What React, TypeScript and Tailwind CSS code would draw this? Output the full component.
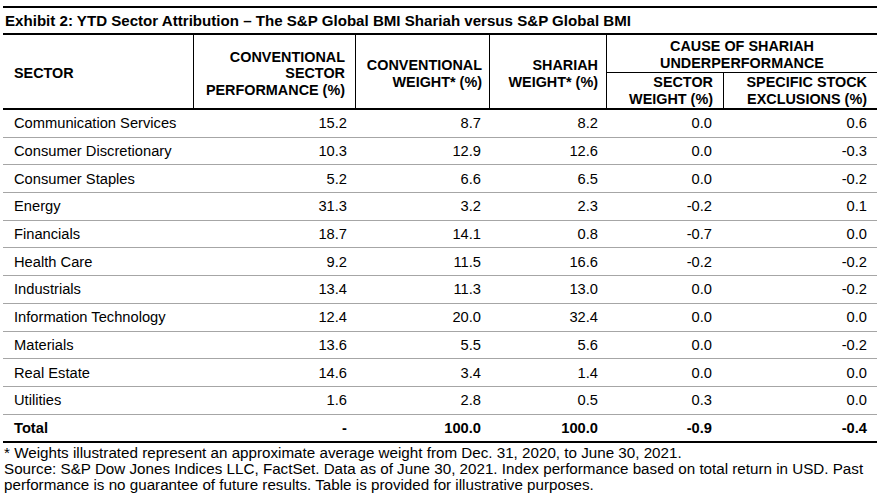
import React from "react";

const rows: [string, string, string, string, string, string][] = [
  ["Communication Services", "15.2", "8.7", "8.2", "0.0", "0.6"],
  ["Consumer Discretionary", "10.3", "12.9", "12.6", "0.0", "-0.3"],
  ["Consumer Staples", "5.2", "6.6", "6.5", "0.0", "-0.2"],
  ["Energy", "31.3", "3.2", "2.3", "-0.2", "0.1"],
  ["Financials", "18.7", "14.1", "0.8", "-0.7", "0.0"],
  ["Health Care", "9.2", "11.5", "16.6", "-0.2", "-0.2"],
  ["Industrials", "13.4", "11.3", "13.0", "0.0", "-0.2"],
  ["Information Technology", "12.4", "20.0", "32.4", "0.0", "0.0"],
  ["Materials", "13.6", "5.5", "5.6", "0.0", "-0.2"],
  ["Real Estate", "14.6", "3.4", "1.4", "0.0", "0.0"],
  ["Utilities", "1.6", "2.8", "0.5", "0.3", "0.0"],
];

const cols = "grid grid-cols-[190px_162px_134px_117px_116px_155px]";

export default function App() {
  return (
    <div
      className="w-[883px] h-[501px] bg-white text-black overflow-hidden"
      style={{ fontFamily: '"Liberation Sans", Arial, sans-serif' }}
    >
      <div className="pt-[6px] pl-[3px] w-[877px]">
        <div className="border-t-[2px] border-b-[2px] border-black h-[29px] flex items-center pl-[2px] font-bold text-[15.1px] leading-none">
          Exhibit 2: YTD Sector Attribution – The S&amp;P Global BMI Shariah versus S&amp;P Global BMI
        </div>
        {/* header */}
        <div className={`${cols} h-[75px] border-b-[2px] border-black font-bold text-[14.4px] leading-[16.5px]`}>
          <div className="flex items-center pl-[11px] pt-[4px]">SECTOR</div>
          <div className="border-l border-black flex items-center justify-end text-right pr-[10px] pt-[4px]">
            CONVENTIONAL<br />SECTOR<br />PERFORMANCE (%)
          </div>
          <div className="border-l border-black flex items-center justify-end text-right pr-[7px] pt-[4px]">
            CONVENTIONAL<br />WEIGHT* (%)
          </div>
          <div className="border-l border-black flex items-center justify-end text-right pr-[8px] pt-[4px]">
            SHARIAH<br />WEIGHT* (%)
          </div>
          <div className="col-span-2 border-l border-black flex flex-col">
            <div className="h-[38px] border-b border-black flex items-center justify-center text-center pt-[2px]">
              CAUSE OF SHARIAH<br />UNDERPERFORMANCE
            </div>
            <div className="flex-1 grid grid-cols-[116px_155px]">
              <div className="flex items-center justify-end text-right pr-[10px]">
                SECTOR<br />WEIGHT (%)
              </div>
              <div className="border-l border-black flex items-center justify-end text-right pr-[11px]">
                SPECIFIC STOCK<br />EXCLUSIONS (%)
              </div>
            </div>
          </div>
        </div>
        {/* rows */}
        <div className="text-[14.7px]">
          {rows.map((r) => (
            <div key={r[0]} className={`${cols} h-[27.7px] border-b border-[#a6a6a6] items-center`}>
              <div className="pl-[11px] whitespace-nowrap">{r[0]}</div>
              <div className="text-right pr-[8px]">{r[1]}</div>
              <div className="text-right pr-[8px]">{r[2]}</div>
              <div className="text-right pr-[8px]">{r[3]}</div>
              <div className="text-right pr-[10px]">{r[4]}</div>
              <div className="text-right pr-[10px]">{r[5]}</div>
            </div>
          ))}
          <div className={`${cols} h-[28px] border-b-[2px] border-black items-center font-bold`}>
            <div className="pl-[11px]">Total</div>
            <div className="text-right pr-[8px]">-</div>
            <div className="text-right pr-[8px]">100.0</div>
            <div className="text-right pr-[8px]">100.0</div>
            <div className="text-right pr-[10px]">-0.9</div>
            <div className="text-right pr-[10px]">-0.4</div>
          </div>
        </div>
        <div className="text-[15.2px] leading-[16px] pt-[2px] pl-[1px]">
          <div>* Weights illustrated represent an approximate average weight from Dec. 31, 2020, to June 30, 2021.</div>
          <div>
            Source: S&amp;P Dow Jones Indices LLC, FactSet. Data as of June 30, 2021. Index performance based on total return in USD. Past
          </div>
          <div>performance is no guarantee of future results. Table is provided for illustrative purposes.</div>
        </div>
      </div>
    </div>
  );
}
